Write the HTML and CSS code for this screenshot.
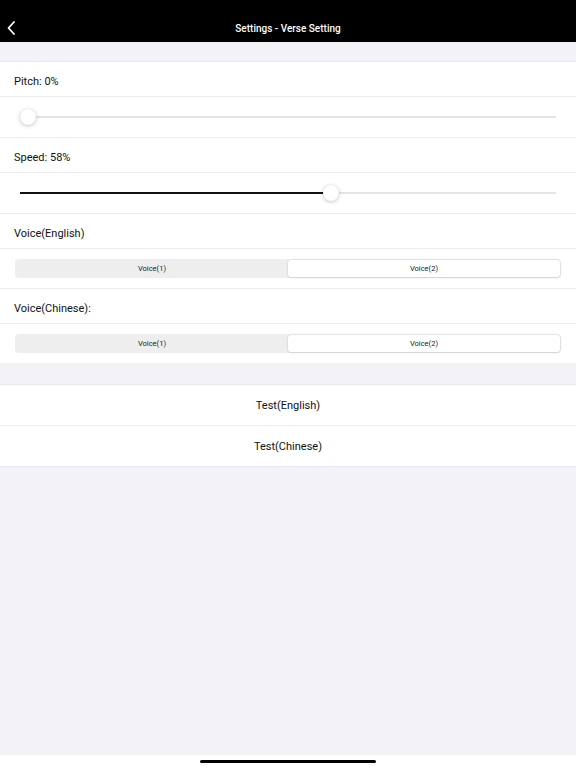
FILE: index.html
```html
<!DOCTYPE html>
<html lang="en">

<head>
    <title>Settings - Verse Setting</title>
    <link rel="stylesheet" href="styles.css">
</head>

<body>
    <div class="navbar">
        <div class="back">
            <svg width="8" height="14" viewBox="0 0 8 14">
                <path d="M7 1 L1.5 7 L7 13" fill="none" stroke="#fff" stroke-width="1.8" stroke-linecap="round" stroke-linejoin="round"/>
            </svg>
        </div>
        <div class="title">Settings - Verse Setting</div>
        <div></div>
    </div>

    <div class="content">
        <div class="spacer"></div>
        <div class="group">
            <div class="row label">Pitch: 0%</div>
            <div class="row slider-row">
                <div class="track">
                    <div class="rail">
                        <div class="fill" style="width:0%"></div>
                        <div class="thumb" style="left:0%"></div>
                    </div>
                </div>
            </div>
            <div class="row label">Speed: 58%</div>
            <div class="row slider-row">
                <div class="track">
                    <div class="rail">
                        <div class="fill" style="width:58%"></div>
                        <div class="thumb" style="left:58%"></div>
                    </div>
                </div>
            </div>
            <div class="row label">Voice(English)</div>
            <div class="row seg-row">
                <div class="segmented">
                    <div class="seg">Voice(1)</div>
                    <div class="seg selected">Voice(2)</div>
                </div>
            </div>
            <div class="row label">Voice(Chinese):</div>
            <div class="row seg-row last">
                <div class="segmented">
                    <div class="seg">Voice(1)</div>
                    <div class="seg selected">Voice(2)</div>
                </div>
            </div>
        </div>
        <div class="spacer wide"></div>
        <div class="group">
            <div class="row button">Test(English)</div>
            <div class="row button last">Test(Chinese)</div>
        </div>
    </div>

    <div class="home">
        <div class="indicator"></div>
    </div>
</body>

</html>
```

FILE: styles.css
```css
body {
    margin: 0;
    width: 576px;
    height: 768px;
    display: flex;
    flex-direction: column;
    background-color: #f2f2f7;
    font-family: Roboto, "Liberation Sans", sans-serif;
    color: #111;
    overflow: hidden;
}

.navbar {
    height: 28px;
    padding-top: 14px;
    background-color: #000;
    display: grid;
    grid-template-columns: 40px 1fr 40px;
    align-items: center;
}

.back {
    padding-left: 7px;
    display: flex;
    align-items: center;
}

.title {
    text-align: center;
    color: #fff;
    font-size: 10px;
    font-weight: 500;
}

.content {
    flex: 1;
}

.spacer {
    height: 19px;
}

.spacer.wide {
    height: 21px;
}

.group {
    background-color: #fff;
    border-top: 1px solid #e8e8ec;
}

.row {
    border-bottom: 1px solid #ececef;
    display: flex;
    align-items: center;
}

.row.last {
    border-bottom: none;
}

.label {
    height: 30px;
    padding: 4px 0 0 14px;
    font-size: 11px;
}

.slider-row {
    height: 40px;
    padding: 0 20px;
}

.track {
    position: relative;
    flex: 1;
    height: 2px;
    background-color: #e4e4e6;
}

.rail {
    position: absolute;
    top: 0;
    bottom: 0;
    left: 7px;
    right: 7px;
}

.fill {
    height: 2px;
    margin-left: -7px;
    padding-left: 7px;
    background-color: #111;
}

.thumb {
    position: absolute;
    top: -7px;
    width: 16px;
    height: 16px;
    margin-left: -7px;
    border-radius: 50%;
    background-color: #fff;
    box-shadow: 0 1px 4px rgba(0, 0, 0, 0.22), 0 0 1px rgba(0, 0, 0, 0.12);
}

.seg-row {
    height: 39px;
    padding: 0 15px;
}

.segmented {
    flex: 1;
    height: 17px;
    display: flex;
    padding: 1px;
    border-radius: 4px;
    background-color: #eeeeef;
}

.seg {
    flex: 1;
    display: flex;
    align-items: center;
    justify-content: center;
    font-size: 7.5px;
    color: #222;
    border-radius: 3px;
}

.seg.selected {
    background-color: #fff;
    box-shadow: 0 0 2px rgba(0, 0, 0, 0.15), 0 1px 2px rgba(0, 0, 0, 0.08);
}

.button {
    height: 40px;
    justify-content: center;
    font-size: 11px;
}

.button.last {
    border-bottom: 1px solid #e8e8ec;
}

.home {
    height: 13px;
    background-color: #fff;
    display: flex;
    justify-content: center;
    align-items: center;
}

.indicator {
    width: 176px;
    height: 3px;
    border-radius: 2px;
    background-color: #000;
}
```
